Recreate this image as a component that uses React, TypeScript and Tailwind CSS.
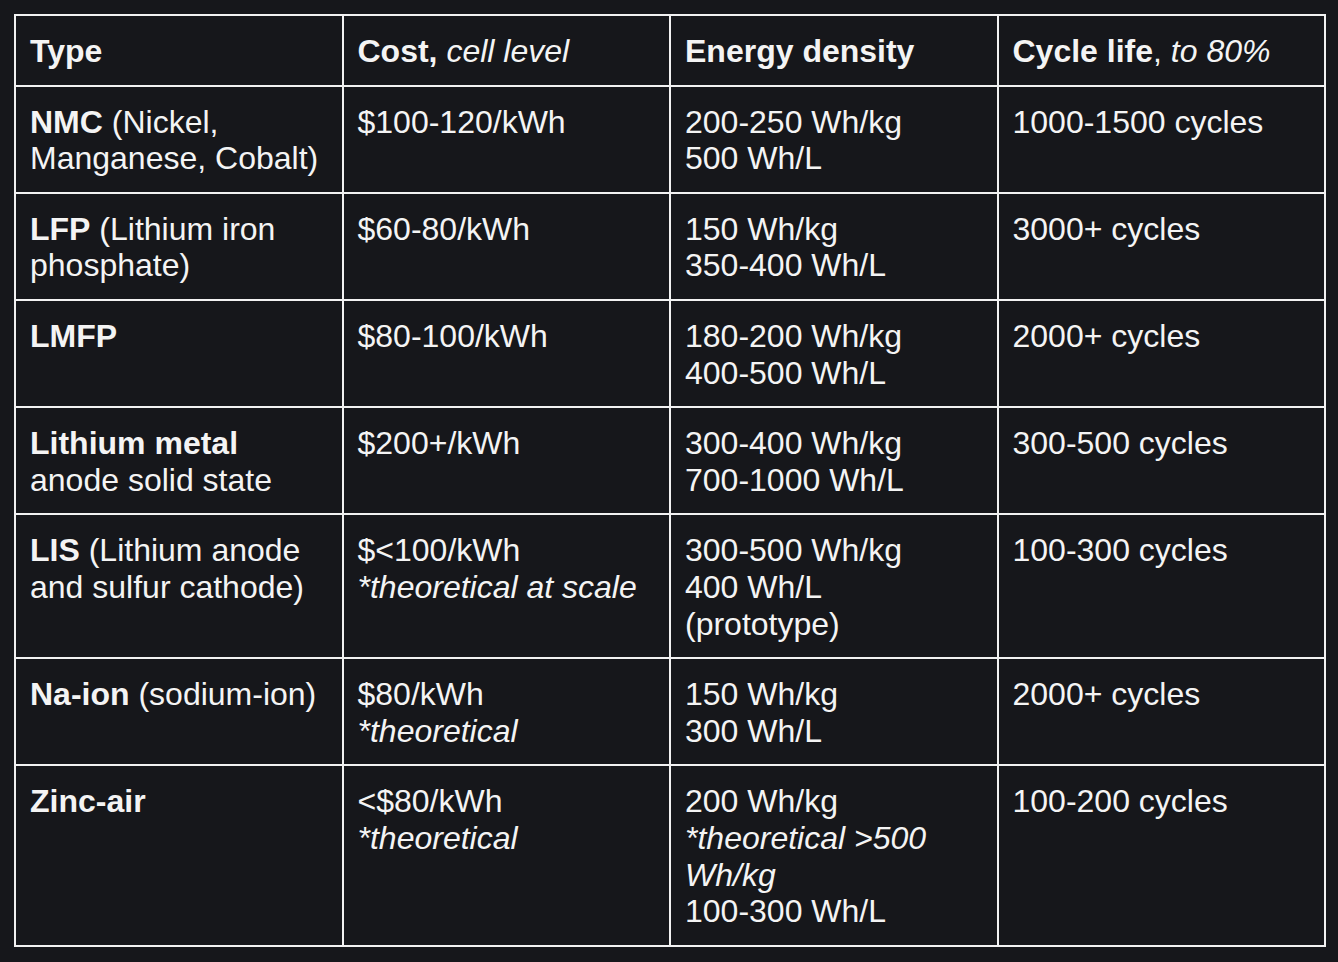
import React from "react";

const Cell = ({ children }: { children: React.ReactNode }) => (
  <div className="bg-[#16171b] pl-[14px] pr-[14px] pt-[17px] pb-[15px] text-[32px] leading-[36.6px] text-[#f4f4f4]">
    {children}
  </div>
);

export default function App() {
  return (
    <div
      className="min-h-screen w-full bg-[#16171b] pt-[14px] pl-[14px]"
      style={{ fontFamily: '"Liberation Sans", Arial, Helvetica, sans-serif' }}
    >
      <div className="grid w-[1312px] grid-cols-4 gap-[2px] bg-[#f2f2f2] p-[2px]">
        <Cell><b>Type</b></Cell>
        <Cell><b>Cost,</b> <i>cell level</i></Cell>
        <Cell><b>Energy density</b></Cell>
        <Cell><b>Cycle life</b>, <i>to 80%</i></Cell>

        <Cell><b>NMC</b> (Nickel,<br />Manganese, Cobalt)</Cell>
        <Cell>$100-120/kWh</Cell>
        <Cell>200-250 Wh/kg<br />500 Wh/L</Cell>
        <Cell>1000-1500 cycles</Cell>

        <Cell><b>LFP</b> (Lithium iron<br />phosphate)</Cell>
        <Cell>$60-80/kWh</Cell>
        <Cell>150 Wh/kg<br />350-400 Wh/L</Cell>
        <Cell>3000+ cycles</Cell>

        <Cell><b>LMFP</b></Cell>
        <Cell>$80-100/kWh</Cell>
        <Cell>180-200 Wh/kg<br />400-500 Wh/L</Cell>
        <Cell>2000+ cycles</Cell>

        <Cell><b>Lithium metal</b><br />anode solid state</Cell>
        <Cell>$200+/kWh</Cell>
        <Cell>300-400 Wh/kg<br />700-1000 Wh/L</Cell>
        <Cell>300-500 cycles</Cell>

        <Cell><b>LIS</b> (Lithium anode<br />and sulfur cathode)</Cell>
        <Cell>$&lt;100/kWh<br /><i>*theoretical at scale</i></Cell>
        <Cell>300-500 Wh/kg<br />400 Wh/L<br />(prototype)</Cell>
        <Cell>100-300 cycles</Cell>

        <Cell><b>Na-ion</b> (sodium-ion)</Cell>
        <Cell>$80/kWh<br /><i>*theoretical</i></Cell>
        <Cell>150 Wh/kg<br />300 Wh/L</Cell>
        <Cell>2000+ cycles</Cell>

        <Cell><b>Zinc-air</b></Cell>
        <Cell>&lt;$80/kWh<br /><i>*theoretical</i></Cell>
        <Cell>200 Wh/kg<br /><i>*theoretical &gt;500<br />Wh/kg</i><br />100-300 Wh/L</Cell>
        <Cell>100-200 cycles</Cell>
      </div>
    </div>
  );
}
